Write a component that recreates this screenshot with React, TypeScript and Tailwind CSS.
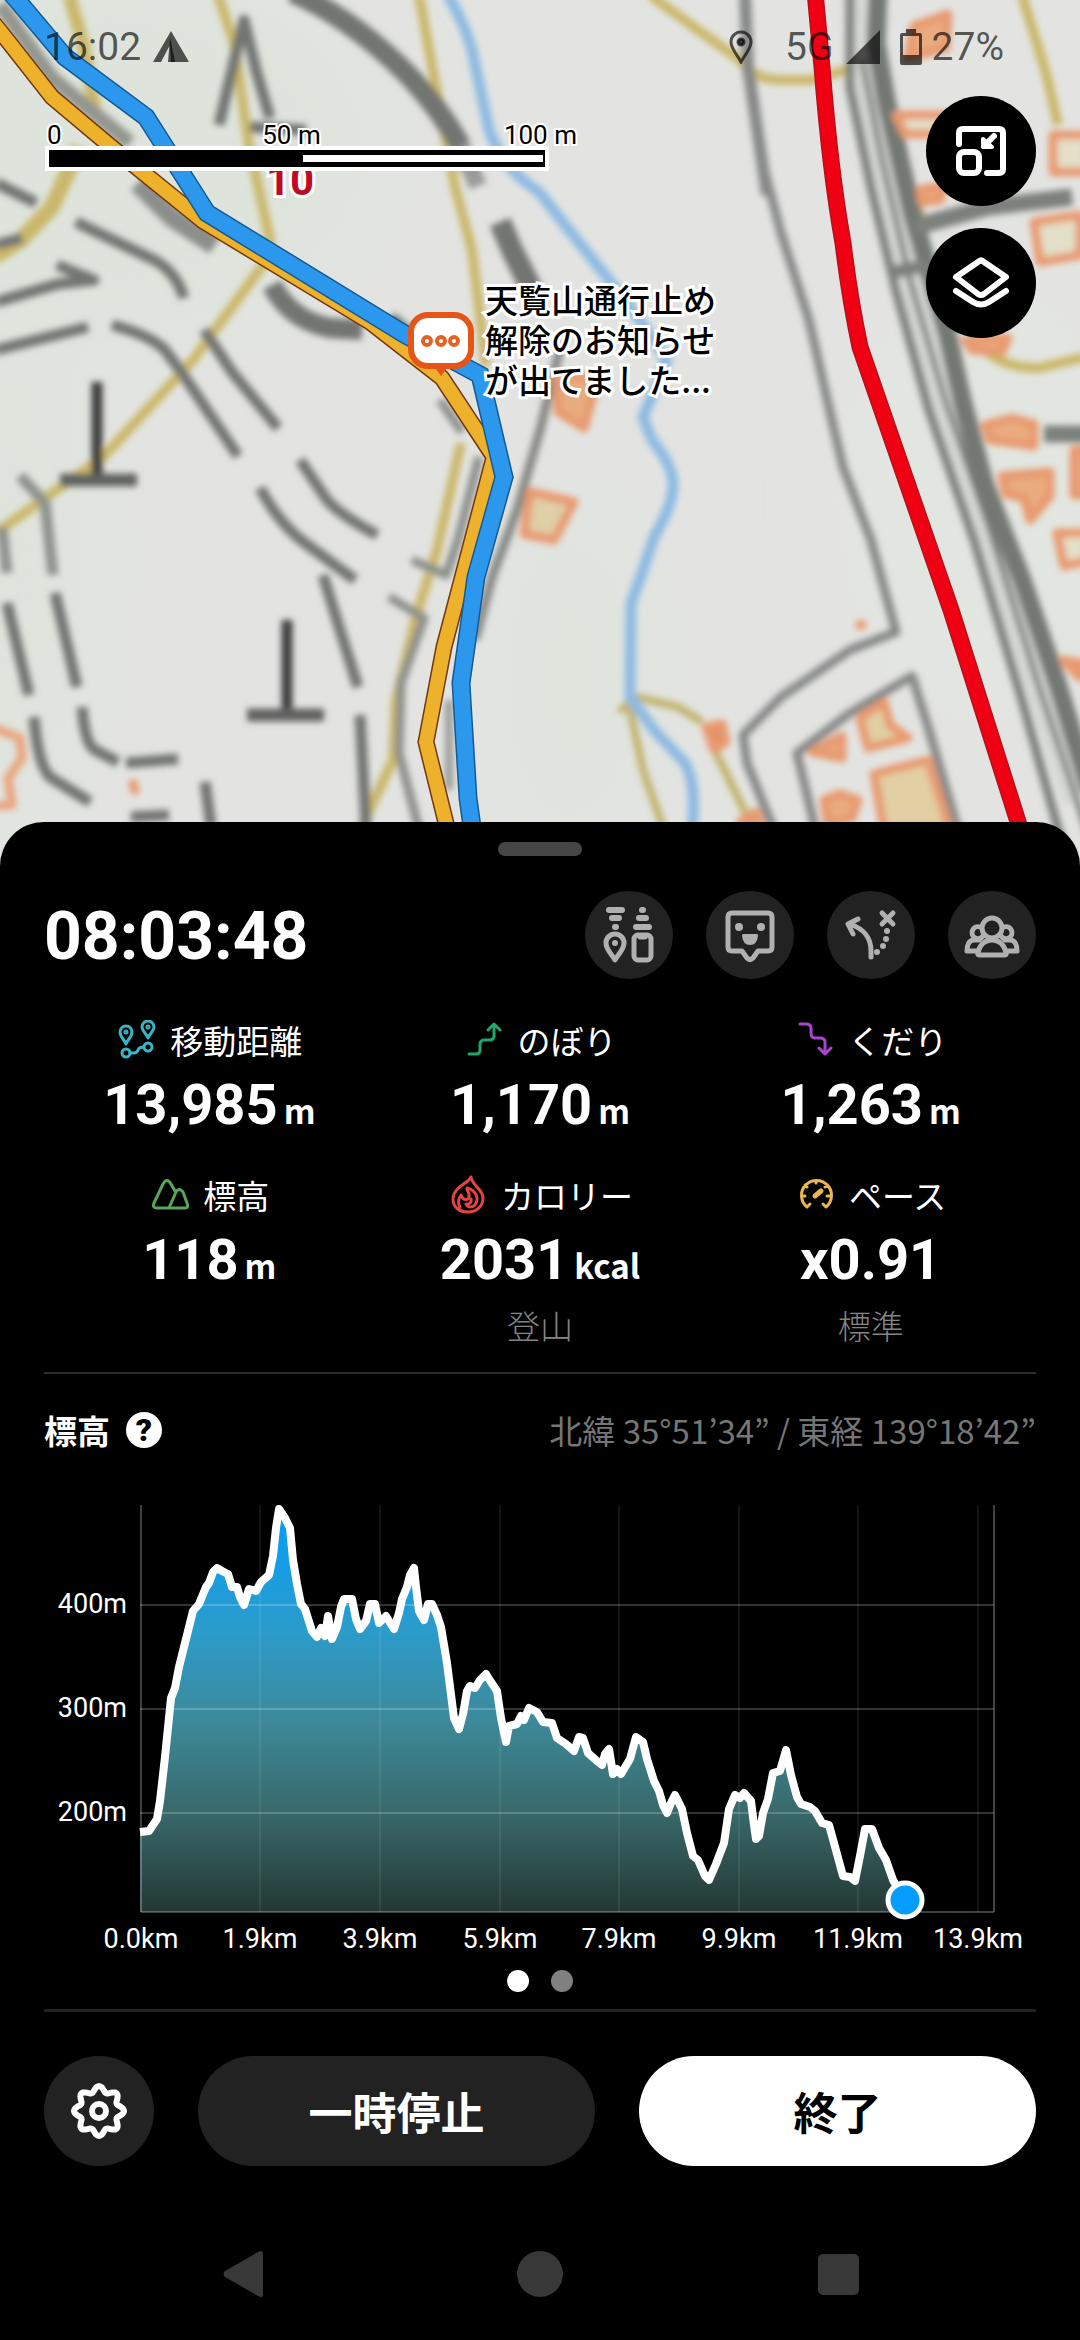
import React from "react";
import clsx from "clsx";

const jp = "font-['Noto_Sans_CJK_JP',sans-serif]";
const roboto = "font-['Roboto',sans-serif]";

const elevation =
  "96,342 105,341 113,329 116,311 121,267 127,208 131,198 135,177 141,153 149,121 155,114 162,97 165,93 169,82 173,78 178,81 184,84 188,97 193,97 196,107 200,115 205,99 212,101 217,92 225,85 229,66 232,38 235,19 241,28 246,38 249,70 253,94 257,114 261,119 268,141 273,147 277,138 281,146 284,126 288,149 293,137 297,117 300,109 308,109 312,129 316,139 322,131 326,114 331,114 335,133 342,126 350,139 355,123 358,109 363,97 366,85 370,78 372,97 375,121 380,130 384,114 388,114 393,125 397,137 403,173 410,228 415,239 419,224 423,201 426,196 431,198 436,190 442,184 447,192 453,201 457,228 462,252 465,236 473,234 477,226 480,230 485,218 493,222 499,232 508,233 513,248 522,254 530,261 535,247 539,248 544,263 553,271 558,275 561,264 565,259 569,284 573,279 577,284 586,269 592,247 599,252 603,269 610,291 615,301 619,315 623,323 627,313 631,305 638,319 643,343 649,366 654,370 661,386 665,390 672,374 680,353 685,319 691,305 696,308 700,303 707,311 710,335 712,349 715,346 719,323 724,309 729,283 736,281 742,260 747,285 753,307 757,314 766,317 771,321 778,333 785,335 790,353 799,386 806,387 811,391 816,366 821,339 828,339 835,358 842,370 849,390 856,402 861,410";

const yTicks = [
  { label: "400m", y: 115 },
  { label: "300m", y: 219 },
  { label: "200m", y: 323 },
];

const xTicks = [
  { label: "0.0km", x: 97 },
  { label: "1.9km", x: 216 },
  { label: "3.9km", x: 336 },
  { label: "5.9km", x: 456 },
  { label: "7.9km", x: 575 },
  { label: "9.9km", x: 695 },
  { label: "11.9km", x: 814 },
  { label: "13.9km", x: 934 },
];

const blueRoute =
  "M10 -8 L17 0 L65 57 L146 117 L207 213 L406 335 L480 375 L504 477 L476 577 L461 683 L468 798 L478 870";
const yellowRoute =
  "M-20 7 L0 31 L52 97 L109 145 L203 221 L370 322 L442 378 L494 457 L444 647 L426 742 L460 880";
const redRoad =
  "M815 -8 L822 67 Q830 170 843 243 Q850 300 860 347 L879 402 L951 610 L1032 866";

const MapCanvas = () => (
  <svg
    viewBox="0 0 1080 866"
    preserveAspectRatio="xMidYMin slice"
    className="absolute inset-0 h-full w-full"
    aria-hidden="true"
  >
    <defs>
      <filter id="soft" x="-5%" y="-5%" width="110%" height="110%">
        <feGaussianBlur stdDeviation="3" />
      </filter>
      <filter id="wash" x="-20%" y="-20%" width="140%" height="140%">
        <feGaussianBlur stdDeviation="45" />
      </filter>
    </defs>
    <rect width="1080" height="866" fill="#e3e4e2" />
    <g filter="url(#wash)" fill="#dee4dc">
      <ellipse cx="90" cy="150" rx="280" ry="180" />
      <ellipse cx="10" cy="560" rx="70" ry="260" />
      <ellipse cx="570" cy="680" rx="60" ry="170" />
      <ellipse cx="980" cy="500" rx="110" ry="200" fill="#e2e6e0" />
    </g>

    <g filter="url(#soft)" fill="none" strokeLinejoin="round">
      {/* footpaths */}
      <g stroke="#cbb76a" strokeWidth="10">
        <path d="M69 -5 L83 43 L95 110" strokeWidth="13" />
        <path d="M79 147 L52 207 L21 240 L-6 257" strokeWidth="16" />
        <path d="M218 -5 L234 43 L248 140 L270 240 Q268 262 257 273 L193 360 L103 457 L10 523 L-8 535" />
        <path d="M419 -5 L434 77 L455 187 L472 250 L486 366" />
        <path d="M461 443 L437 550 L417 613 L396 700 L393 760 L360 830" />
        <path d="M650 -5 L698 30 L740 60 Q755 80 780 80 L812 80 L846 70" />
        <path d="M1022 -5 L1046 73 L1058 125" />
        <path d="M905 170 L925 230" />
        <path d="M980 345 Q1000 368 1039 368 L1085 357" />
        <path d="M619 712 L636 697 L678 707 L702 722 M628 700 L643 770 L664 830 M716 753 L750 822" stroke="#c2b36e" strokeWidth="8" />
      </g>

      {/* stream */}
      <path
        d="M448 -5 Q465 25 472 50 L489 130 Q500 160 523 180 L540 193 L561 220 L609 280 L640 320 L667 360 L643 417 L652 440 Q673 465 673 485 Q673 505 654 537 Q640 580 631 603 L630 697 L654 730 L685 763 Q697 785 692 830"
        stroke="#8ebae2"
        strokeWidth="11"
      />

      {/* tracks */}
      <g stroke="#727572" strokeWidth="11">
        <path d="M292 -8 Q345 15 396 63 Q435 100 461 147" strokeWidth="21" />
        <path d="M461 147 L478 186" strokeWidth="18" stroke="#9a9b98" />
        <path d="M500 222 L512 250 L532 290" strokeWidth="22" />
        <path d="M219 125 L232 70 L244 20 L256 70 L270 118 M250 127 L306 130" />
        <path d="M0 5 L52 78 L90 110 L130 143" strokeWidth="15" stroke="#93968f" />
        <path d="M138 183 L172 217 L215 245" strokeWidth="20" stroke="#8b8e8a" />
        <path d="M272 285 Q290 320 330 328 L362 330" strokeWidth="20" />
        <path d="M390 318 L410 335" strokeWidth="14" />
        <path d="M76 222 L148 257 Q175 268 184 298" />
        <path d="M-4 183 L36 203 M-4 245 L22 238" />
        <path d="M-4 302 L58 284 L94 280 L57 265" />
        <path d="M-4 350 L88 327 M112 325 Q150 335 165 350 L182 373 L238 456" />
        <path d="M204 330 L232 372 L278 428" />
        <path d="M300 460 L327 500 Q340 515 377 535" />
        <path d="M260 488 Q280 525 305 543 L355 580" />
        <path d="M323 575 L340 630 L358 687" />
        <path d="M360 715 L366 826" />
        <path d="M20 476 L45 503 L53 575 M2 527 L7 573" stroke="#8e928d" />
        <path d="M55 593 L77 687 M7 603 L29 695" />
        <path d="M34 717 Q38 765 50 777 L90 802 M82 707 Q85 745 95 750 L118 762 M126 763 L178 759" />
        <path d="M131 817 L169 815 M205 782 L211 826" />
        <path d="M440 400 L462 432 M479 457 L458 540 L446 575 L412 560" strokeWidth="9" stroke="#8d8f8b" />
        <path d="M389 597 L424 618 L401 683 L399 753 L419 830" strokeWidth="9" stroke="#8d8f8b" />
        <path d="M449 700 L449 790" strokeWidth="8" stroke="#9a9b98" />
        <path d="M562 340 L540 430 L517 510 L492 577 L475 640" strokeWidth="9" stroke="#858784" />
      </g>

      {/* survey marks */}
      <path d="M97 382 V478 M287 620 V712" stroke="#3d3d3d" strokeWidth="11" />
      <path d="M60 480 H137 M247 715 H324" stroke="#606260" strokeWidth="13" />

      {/* roads */}
      <g stroke="#868887" strokeWidth="9">
        <path d="M745 -5 L748 67 L760 153 L781 233 L809 320 L833 425 L843 467 L871 540 L896 632 L850 650 L781 697 L743 735 L747 763 L774 830" />
        <path d="M745 -5 L748 67 L767 195" strokeWidth="12" />
        <path d="M815 828 L797 753 L850 713 L912 676 L929 730 L958 830" />
      </g>
      <path d="M858 -8 L868 70 L905 250 L944 400 L1000 560 L1080 800" stroke="#d5d8d4" strokeWidth="34" />
      <g stroke="#7d807d" strokeWidth="8">
        <path d="M850 -8 L850 87 L871 187 L895 287 L929 410 L974 540 L1022 700 L1064 850" strokeWidth="9" />
        <path d="M862 60 L882 160 L910 280 L945 400 L990 530 L1040 690 L1090 840" strokeWidth="6" />
        <path d="M878 -8 L876 43 L886 100 L912 213 L947 333 L962 400 L984 483 L1022 580 L1057 683 L1090 790" strokeWidth="19" stroke="#737873" />
        <path d="M915 227 L988 207 L1072 197" strokeWidth="17" />
        <path d="M888 273 L930 265" strokeWidth="13" />
        <path d="M1044 434 H1090" strokeWidth="17" />
      </g>

      {/* buildings */}
      <g stroke="#e89a70" fill="#e9ac80" strokeWidth="9">
        <path d="M914 26 L948 14 L946 48 L908 58 Z" />
        <path d="M896 115 H945 L938 134 H905 Z" fill="#e3dfc8" />
        <path d="M920 190 L945 185 L940 200 L922 202 Z" />
        <path d="M1053 135 H1090 V172 H1053 Z" fill="#e3dfc8" />
        <path d="M1034 222 L1080 215 V255 L1040 262 Z" fill="#e3dfc8" />
        <path d="M965 340 L1008 338 L1002 352 L972 350 Z" />
        <path d="M985 425 L1012 418 L1034 424 L1034 446 L990 440 Z" />
        <path d="M1002 476 L1050 472 L1050 496 L1030 520 L1024 498 L1006 494 Z" />
        <path d="M1057 533 H1090 V560 L1064 566 Z" fill="#e3dfc8" />
        <path d="M1074 450 H1090 V495 H1074 Z" />
        <path d="M1063 660 L1085 664 L1080 678 Z" />
        <path d="M558 375 L598 378 L584 428 L558 412 Z" />
        <path d="M530 492 L574 502 L554 540 L524 534 Z" fill="#e0cfa8" />
        <path d="M812 752 L842 736 V758 Z" />
        <path d="M860 718 L884 702 L890 725 L908 738 L868 748 Z" fill="#e2cfa4" />
        <path d="M874 774 L928 760 L950 830 H884 Z" fill="#e2cfa4" />
        <path d="M824 800 L840 794 L858 800 L852 818 L828 824 Z" />
        <path d="M706 727 L722 724 L726 742 L714 750 Z" fill="#e48c62" />
        <path d="M740 822 L756 812 L762 830 Z" />
        <path d="M-6 728 L20 738 L22 758 L8 778 L12 805 L-6 806" fill="none" stroke="#eaa47e" />
        <path d="M132 780 L136 794" />
        <path d="M856 625 H866" />
      </g>
    </g>

    <path d={redRoad} fill="none" stroke="#b8101c" strokeWidth="17" />
    <path d={redRoad} fill="none" stroke="#ef0012" strokeWidth="14" />
    <path d={yellowRoute} fill="none" stroke="#73380c" strokeWidth="17" />
    <path d={yellowRoute} fill="none" stroke="#edb12c" strokeWidth="14" />
    <path d={blueRoute} fill="none" stroke="#155a94" strokeWidth="19" />
    <path d={blueRoute} fill="none" stroke="#2b98ee" strokeWidth="16" />

    <text
      x="290"
      y="195"
      textAnchor="middle"
      className="fill-[#c00a25] stroke-white font-['Roboto',sans-serif] text-[42px] font-bold [paint-order:stroke]"
      strokeWidth="6"
    >
      10
    </text>

    {/* comment marker */}
    <path d="M432 364 L441 376 L450 364 Z" fill="#e65518" />
    <rect x="411" y="315" width="60" height="51" rx="17" fill="#fff" stroke="#e65518" strokeWidth="6" />
    <g fill="#fff" stroke="#df6425" strokeWidth="4">
      <circle cx="427" cy="341" r="4" />
      <circle cx="441" cy="341" r="4" />
      <circle cx="454" cy="341" r="4" />
    </g>
  </svg>
);

const StatusBar = () => (
  <div
    className={clsx(
      roboto,
      "relative flex h-[94px] items-center justify-between pr-[76px] pl-11 text-[39px] text-black/65",
    )}
  >
    <div className="flex items-center gap-3">
      <span>16:02</span>
      <svg viewBox="0 0 36 32" className="h-8 w-9" fill="currentColor">
        <path d="M18 0 L36 31 H18 L17 14 L8 31 H0 Z" />
        <path d="M17 6 L22 31 H15 Z" />
      </svg>
    </div>
    <div className="flex items-center">
      <svg viewBox="0 0 24 34" className="mr-8 h-[34px] w-6" fill="none" stroke="currentColor" strokeWidth="3">
        <path d="M12 32 C9 26 2 19 2 12 A10 10 0 0 1 22 12 C22 19 15 26 12 32 Z" />
        <circle cx="12" cy="12" r="3" fill="currentColor" />
      </svg>
      <span>5G</span>
      <svg viewBox="0 0 34 34" className="ml-3 h-[34px] w-[34px]" fill="currentColor">
        <path d="M34 0 V34 H0 Z" />
      </svg>
      <svg viewBox="0 0 22 36" className="mr-[10px] ml-5 h-9 w-[22px]" fill="currentColor">
        <path
          fillRule="evenodd"
          d="M6 0 H16 V4 H20 Q22 4 22 6 V34 Q22 36 20 36 H2 Q0 36 0 34 V6 Q0 4 2 4 H6 Z M3 7 V26 H19 V7 Z"
        />
      </svg>
      <span>27%</span>
    </div>
  </div>
);

const ScaleBar = () => (
  <div className={clsx(roboto, "absolute top-[120px] left-[45px] w-[532px] text-[26px] leading-[30px] text-black")}>
    <div className="flex justify-between pl-[2px] [-webkit-text-stroke:4px_white] [paint-order:stroke]">
      <span className="w-8">0</span>
      <span>50 m</span>
      <span>100 m</span>
    </div>
    <div className="-mt-1 w-[504px] bg-white p-1">
      <div className="flex h-[17px] justify-end bg-black p-[5px] pr-[2px]">
        <div className="w-60 bg-white" />
      </div>
    </div>
  </div>
);

const actions = [
  {
    title: "表示項目",
    icon: (
      <>
        <g strokeWidth="6">
          <path d="M24 19 H37 M27 27 H34 M30 36 H31 M57 19 H58 M54 27 H61 M51 36 H64" />
        </g>
        <path d="M30 69 C27 63 21 59 21 52 A9 9 0 0 1 39 52 C39 59 33 63 30 69 Z" />
        <circle cx="30" cy="52" r="3" fill="currentColor" stroke="none" />
        <rect x="49" y="44" width="17" height="25" rx="4" />
        <path d="M55 46 H60" />
      </>
    ),
  },
  {
    title: "フィールドメモ",
    icon: (
      <>
        <path d="M26 22 H62 Q66 22 66 26 V56 Q66 60 62 60 H52 L47 67 Q44 70 41 67 L36 60 H26 Q22 60 22 56 V26 Q22 22 26 22 Z" />
        <g fill="currentColor" stroke="none">
          <circle cx="33" cy="36" r="4" />
          <circle cx="55" cy="36" r="4" />
          <path d="M37 43 H51 Q52 43 52 45 Q51 54 44 54 Q37 54 36 45 Q36 43 37 43 Z" />
        </g>
      </>
    ),
  },
  {
    title: "ルート変更",
    icon: (
      <>
        <path d="M44 66 V60 C44 46 37 38 23 33 M31 28 L21 33 L26 43 M55 22 L66 33 M66 22 L55 33" />
        <g fill="currentColor" stroke="none">
          <circle cx="60" cy="40" r="3" />
          <circle cx="59" cy="48" r="3" />
          <circle cx="56" cy="55" r="3" />
          <circle cx="50" cy="61" r="3" />
        </g>
      </>
    ),
  },
  {
    title: "みまもり",
    icon: (
      <g strokeWidth="5">
        <circle cx="44" cy="37" r="10" />
        <path d="M35 45 A6 6 0 1 1 32 36 M53 45 A6 6 0 1 0 56 36" />
        <path d="M31 64 Q29 64 30 61 C32 54 36 49 44 49 C52 49 56 54 58 61 Q59 64 57 64 Z" />
        <path d="M31 49 H26 C21 49 19 54 19 60 H30 M57 49 H62 C67 49 69 54 69 60 H58" />
      </g>
    ),
  },
];

const stats = [
  {
    title: "移動距離",
    value: "13,985",
    unit: "m",
    color: "text-[#38b5c4]",
    icon: (
      <>
        <path d="M10 24 C8 19 4 17 4 12 A6 6 0 0 1 16 12 C16 17 12 19 10 24 Z M32 18 C30 13 26 11 26 7 A6 6 0 0 1 38 7 C38 11 34 13 32 18 Z" />
        <circle cx="10" cy="33" r="4" />
        <circle cx="32" cy="27" r="4" />
        <path d="M14 33 H18 Q21 33 22 30 Q23 27 28 27" />
        <circle cx="10" cy="12" r="1" />
        <circle cx="32" cy="7" r="1" />
      </>
    ),
  },
  {
    title: "のぼり",
    value: "1,170",
    unit: "m",
    color: "text-[#20a86c]",
    icon: <path d="M6 34 H13 Q17 34 17 30 V25 Q17 20 21 20 H26 Q31 20 31 16 V4 M25 10 L31 4 L37 10" />,
  },
  {
    title: "くだり",
    value: "1,263",
    unit: "m",
    color: "text-[#a943d0]",
    icon: <path d="M6 4 H12 Q17 4 17 8 V13 Q17 18 21 18 H26 Q31 18 31 22 V33 M25 28 L31 34 L37 28" />,
  },
  {
    title: "標高",
    value: "118",
    unit: "m",
    color: "text-[#58a65c]",
    icon: (
      <path d="M20 33 H8 Q3 33 5 28 L14 9 Q18 2 22 9 L26 16 M20 33 L27 17 Q30 12 34 17 L38 28 Q40 33 36 33 Z" />
    ),
  },
  {
    title: "カロリー",
    value: "2031",
    unit: "kcal",
    note: "登山",
    color: "text-[#e2463f]",
    icon: (
      <path d="M24 2 C22 8 6 12 6 24 C6 32 12 37 21 37 C30 37 36 31 36 23 C36 14 26 12 24 2 Z M13 32 C10 27 12 23 14 20 C16 26 23 26 22 20 C22 16 19 15 20 13 C28 15 32 22 29 28 C27 33 21 33 19 29 C22 30 25 27 24 24" />
    ),
  },
  {
    title: "ペース",
    value: "x0.91",
    unit: "",
    note: "標準",
    color: "text-[#e9b64f]",
    icon: (
      <>
        <path d="M12 32 A15 15 0 1 1 31 32 L28 29 M12 32 L15 29 M21 8 V6 M12 12 L10 10 M7 21 H10 M35 21 H32 M30 12 L32 10" />
        <path d="M20 21 L26 16" strokeWidth="5" />
      </>
    ),
  },
];

const ElevationChart = () => (
  <svg viewBox="0 0 992 470" className="mt-10 w-full" role="img" aria-label="標高グラフ">
    <defs>
      <linearGradient id="fill" x1="0" y1="19" x2="0" y2="422" gradientUnits="userSpaceOnUse">
        <stop offset="0" stopColor="#049dfb" />
        <stop offset="0.3" stopColor="#2b9ccb" />
        <stop offset="0.52" stopColor="#3c8a9b" />
        <stop offset="0.75" stopColor="#39696b" />
        <stop offset="1" stopColor="#243834" />
      </linearGradient>
    </defs>
    <polygon points={`${elevation} 861,422 96,422`} fill="url(#fill)" />
    <g stroke="#fff">
      {xTicks.slice(1).map((tick) => (
        <path key={tick.label} d={`M${tick.x} 15 V422`} strokeOpacity="0.15" strokeWidth="1" />
      ))}
      {yTicks.map((tick) => (
        <path key={tick.label} d={`M96 ${tick.y} H950`} strokeOpacity="0.4" strokeWidth="1" />
      ))}
      <path d="M97 15 V422 H950 V15" fill="none" strokeOpacity="0.5" strokeWidth="1" />
    </g>
    <polyline points={elevation} fill="none" stroke="#fff" strokeWidth="8" strokeLinejoin="round" />
    <circle cx="861" cy="410" r="17" fill="#049dfb" stroke="#fff" strokeWidth="5" />
    <g className="fill-white font-['Roboto',sans-serif] text-[27px]">
      {yTicks.map((tick) => (
        <text key={tick.label} x="83" y={tick.y + 8} textAnchor="end">
          {tick.label}
        </text>
      ))}
      {xTicks.map((tick) => (
        <text key={tick.label} x={tick.x} y="458" textAnchor="middle">
          {tick.label}
        </text>
      ))}
    </g>
  </svg>
);

const gearPath =
  Array.from({ length: 96 }, (_, i) => {
    const a = (i / 96) * Math.PI * 2;
    const r = 22 + 3 * Math.cos(a * 8);
    return `${i ? "L" : "M"}${(30 + r * Math.sin(a)).toFixed(1)} ${(30 - r * Math.cos(a)).toFixed(1)}`;
  }).join(" ") + " Z";

const App = () => {
  return (
    <div className={clsx(jp, "flex min-h-screen flex-col bg-black text-white")}>
      <section className="relative h-[866px] overflow-hidden">
        <MapCanvas />
        <StatusBar />
        <ScaleBar />
        <p className="absolute top-[279px] left-[485px] text-[33px] leading-10 font-medium text-black [-webkit-text-stroke:6px_white] [paint-order:stroke]">
          天覧山通行止め
          <br />
          解除のお知らせ
          <br />
          が出てました...
        </p>
        <div className="absolute top-24 right-11 flex flex-col gap-[22px]">
          <button aria-label="地図を縮小" className="size-[110px] rounded-full bg-black text-white">
            <svg viewBox="0 0 110 110" fill="none" stroke="currentColor" strokeWidth="6" strokeLinecap="round" strokeLinejoin="round">
              <path d="M33 48 V37 Q33 33 37 33 H73 Q77 33 77 37 V73 Q77 77 73 77 H61" />
              <rect x="33" y="56" width="20" height="21" rx="5" />
              <path d="M68 40 L58 50" />
              <path d="M57 43 V51 H66 Z" fill="currentColor" strokeWidth="4" />
            </svg>
          </button>
          <button aria-label="レイヤー" className="size-[110px] rounded-full bg-black text-white">
            <svg viewBox="0 0 110 110" fill="none" stroke="currentColor" strokeWidth="6" strokeLinecap="round" strokeLinejoin="round">
              <path d="M52 34 Q55 31 58 34 L80 49 L58 66 Q55 68 52 66 L30 49 Z" />
              <path d="M30 63 L47 74 Q55 79 63 74 L80 63" />
            </svg>
          </button>
        </div>
      </section>

      <main className="relative -mt-11 flex flex-col rounded-t-[44px] bg-black px-11 pt-5">
        <div className="h-[14px] w-[84px] self-center rounded-full bg-[#464646]" />

        <div className="mt-[35px] flex items-end justify-between">
          <h1 className={clsx(roboto, "text-[66px] leading-[84px] font-bold")}>08:03:48</h1>
          <div className="flex gap-[33px]">
            {actions.map((action) => (
              <button
                key={action.title}
                aria-label={action.title}
                className="size-[88px] rounded-full bg-[#222222] text-[#b0b0b0]"
              >
                <svg viewBox="0 0 88 88" fill="none" stroke="currentColor" strokeWidth="5" strokeLinecap="round" strokeLinejoin="round">
                  {action.icon}
                </svg>
              </button>
            ))}
          </div>
        </div>

        <dl className="mt-[41px] grid grid-cols-3 gap-y-[38px]">
          {stats.map((stat) => (
            <div key={stat.title} className="flex flex-col items-center">
              <dt className="flex h-10 items-center gap-[14px] text-[33px]">
                <svg
                  viewBox="0 0 40 40"
                  className={clsx("size-10", stat.color)}
                  fill="none"
                  stroke="currentColor"
                  strokeWidth="3"
                  strokeLinecap="round"
                  strokeLinejoin="round"
                >
                  {stat.icon}
                </svg>
                <span className="leading-10">{stat.title}</span>
              </dt>
              <dd className="mt-[13px] flex h-16 items-baseline gap-[6px] font-bold">
                <span className={clsx(roboto, "text-[56px] leading-16")}>{stat.value}</span>
                {stat.unit && <span className="text-[33px] leading-10">{stat.unit}</span>}
              </dd>
              {stat.note && (
                <dd className="mt-[13px] text-[33px] leading-10 font-light text-[#858585]">{stat.note}</dd>
              )}
            </div>
          ))}
        </dl>

        <hr className="mt-[27px] border-t-2 border-[#2c2c2c]" />

        <div className="mt-9 flex h-10 items-center justify-between">
          <div className="flex items-center gap-4">
            <h2 className="text-[33px] leading-10 font-bold">標高</h2>
            <button
              aria-label="ヘルプ"
              className={clsx(roboto, "size-9 rounded-full bg-white text-center text-[32px] leading-9 font-black text-black")}
            >
              ?
            </button>
          </div>
          <span className="text-[33px] leading-10 text-[#767676]">
            北緯 35°51’34” / 東経 139°18’42”
          </span>
        </div>

        <ElevationChart />

        <div className="mt-[10px] flex justify-center gap-[22px]">
          <span className="size-[22px] rounded-full bg-white" />
          <span className="size-[22px] rounded-full bg-[#808080]" />
        </div>

        <hr className="mt-[17px] border-t-3 border-[#222222]" />

        <div className="mt-11 flex gap-11">
          <button aria-label="設定" className="size-[110px] shrink-0 rounded-full bg-[#222222]">
            <svg viewBox="0 0 60 60" className="mx-auto size-[60px]" fill="none" stroke="currentColor" strokeWidth="6" strokeLinejoin="round">
              <path d={gearPath} />
              <circle cx="30" cy="30" r="7" />
            </svg>
          </button>
          <button className="h-[110px] flex-1 rounded-full bg-[#222222] text-[44px] font-bold">一時停止</button>
          <button className="h-[110px] flex-1 rounded-full bg-white text-[44px] font-bold text-black">終了</button>
        </div>
      </main>

      <nav className="mt-[84px] mb-9 grid grid-cols-[1fr_auto_1fr] items-center px-[221px] text-[#383838]">
        <button aria-label="戻る" className="justify-self-start">
          <svg viewBox="0 0 48 48" className="size-12" fill="currentColor">
            <path d="M4 21 L37 2 Q42 -1 42 4 V44 Q42 49 37 46 L4 27 Q1 24 4 21 Z" />
          </svg>
        </button>
        <button aria-label="ホーム" className="size-[46px] rounded-full bg-[#383838]" />
        <button aria-label="履歴" className="size-[41px] justify-self-end rounded-[5px] bg-[#383838]" />
      </nav>
    </div>
  );
};

export default App;
